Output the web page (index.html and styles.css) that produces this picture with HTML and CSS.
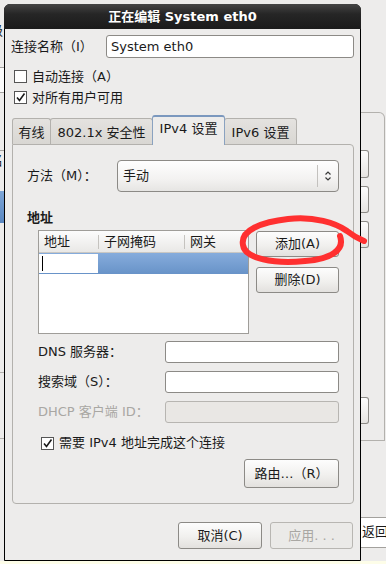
FILE: index.html
```html
<!DOCTYPE html>
<html lang="zh-CN">
<head>
    <meta charset="UTF-8">
    <title>正在编辑 System eth0</title>
    <link rel="stylesheet" href="styles.css">
</head>
<body>
    <div class="screen">
        <!-- window behind, left edge -->
        <div class="bg-left">
            <div class="bg-char">级</div>
            <div class="bg-entry"></div>
            <div class="bg-list">
                <div class="bg-list-text">名</div>
                <div class="bg-list-arrow">▽</div>
                <div class="bg-list-sel"></div>
            </div>
            <div class="bg-frame"></div>
        </div>

        <!-- Main dialog -->
        <div class="dialog-col">
            <div class="dialog">
                <div class="titlebar">正在编辑 System eth0</div>
                <div class="dialog-body">
                    <div class="name-row">
                        <span class="name-label">连接名称（I）</span>
                        <div class="entry name-entry">System eth0</div>
                    </div>
                    <div class="check-row first">
                        <span class="checkbox"></span>
                        <span>自动连接（A）</span>
                    </div>
                    <div class="check-row">
                        <span class="checkbox">
                            <svg width="11" height="11" viewBox="0 0 11 11"><path d="M2 5.5 L4.5 8.5 L9.5 1.5" fill="none" stroke="#1a1a1a" stroke-width="1.6"/></svg>
                        </span>
                        <span>对所有用户可用</span>
                    </div>

                    <div class="notebook">
                        <div class="tabs">
                            <div class="tab tab-wired">有线</div>
                            <div class="tab tab-8021x">802.1x 安全性</div>
                            <div class="tab tab-active">IPv4 设置</div>
                            <div class="tab tab-ipv6">IPv6 设置</div>
                        </div>
                        <div class="tab-panel">
                            <div class="method-row">
                                <span class="method-label">方法（M）：</span>
                                <div class="combo">
                                    <span class="combo-text">手动</span>
                                    <span class="combo-sep"></span>
                                    <span class="combo-arrows">
                                        <svg width="8" height="12" viewBox="0 0 8 12"><path d="M1.5 4.5 L4 2 L6.5 4.5 M1.5 7.5 L4 10 L6.5 7.5" fill="none" stroke="#3a3a3a" stroke-width="1.2"/></svg>
                                    </span>
                                </div>
                            </div>

                            <div class="section-title">地址</div>
                            <div class="address-row">
                                <div class="addr-table">
                                    <div class="addr-head">
                                        <div class="col col-addr">地址</div>
                                        <div class="col col-mask">子网掩码</div>
                                        <div class="col col-gw">网关</div>
                                    </div>
                                    <div class="addr-sel">
                                        <div class="edit-cell"><span class="caret"></span></div>
                                    </div>
                                </div>
                                <div class="addr-buttons">
                                    <div class="button btn-add">添加(A)</div>
                                    <div class="button btn-del">删除(D)</div>
                                </div>
                            </div>

                            <div class="form-rows">
                                <div class="form-row">
                                    <span class="form-label">DNS 服务器：</span>
                                    <div class="entry form-entry"></div>
                                </div>
                                <div class="form-row">
                                    <span class="form-label">搜索域（S）：</span>
                                    <div class="entry form-entry"></div>
                                </div>
                                <div class="form-row disabled">
                                    <span class="form-label">DHCP 客户端 ID：</span>
                                    <div class="entry form-entry"></div>
                                </div>
                            </div>

                            <div class="check-row require-row">
                                <span class="checkbox">
                                    <svg width="11" height="11" viewBox="0 0 11 11"><path d="M2 5.5 L4.5 8.5 L9.5 1.5" fill="none" stroke="#1a1a1a" stroke-width="1.6"/></svg>
                                </span>
                                <span>需要 IPv4 地址完成这个连接</span>
                            </div>

                            <div class="route-row">
                                <div class="button btn-route">路由…（R）</div>
                            </div>
                        </div>
                    </div>

                    <div class="dialog-actions">
                        <div class="button btn-cancel">取消(C)</div>
                        <div class="button btn-apply">应用. . .</div>
                    </div>
                </div>
            </div>
        </div>

        <!-- window behind, right edge -->
        <div class="bg-right">
            <div class="bg-panel">
                <div class="bg-btn b1"></div>
                <div class="bg-btn b2"></div>
                <div class="bg-btn b3"></div>
                <div class="bg-btn b4"></div>
            </div>
            <div class="bg-back">返回</div>
        </div>
    </div>
    <div class="footer-strip"></div>

    <!-- red marker drawn over the screenshot -->
    <svg class="scribble" width="386" height="564" viewBox="0 0 386 564">
        <path d="M340 236 C345 250 331 259 305 261 C274 264 245 259 243 245 C240 230 262 222 288 219 C314 216 336 223 347 231 C352 235 357 238 364 241" fill="none" stroke="#ff3030" stroke-width="6" stroke-linecap="round" stroke-linejoin="round"/>
    </svg>
</body>
</html>
```

FILE: styles.css
```css
:root {
    --bg: #edeceb;
    --text: #1a1a1a;
    --border: #8c8a86;
    --frame: #b3b1ad;
}

* {
    box-sizing: border-box;
}

body {
    margin: 0;
    width: 386px;
    height: 564px;
    overflow: hidden;
    position: relative;
    background: var(--bg);
    color: var(--text);
    font-family: "DejaVu Sans", "Noto Sans CJK SC", sans-serif;
    font-size: 13px;
    line-height: 16px;
}

.screen {
    display: flex;
    height: 561px;
}

.footer-strip {
    height: 3px;
    background: #fdfde8;
}

/* Background window bits */
.bg-left {
    width: 4px;
    overflow: hidden;
    display: flex;
    flex-direction: column;
}

.bg-char {
    margin: 24px 0 0 -10px;
    height: 14px;
    line-height: 14px;
    white-space: nowrap;
}

.bg-entry {
    margin-top: 29px;
    height: 26px;
    background: #fbfbfb;
    border-top: 1px solid #a5a3a0;
    border-bottom: 1px solid #a5a3a0;
}

.bg-list {
    margin-top: 57px;
    border-top: 1px solid #a5a3a0;
}

.bg-list-text {
    margin-left: -10px;
    height: 20px;
    line-height: 20px;
    white-space: nowrap;
}

.bg-list-arrow {
    margin-left: -8px;
    height: 20px;
    font-size: 9px;
    line-height: 10px;
}

.bg-list-sel {
    height: 32px;
    background: linear-gradient(#7ea6d7, #5a87c0);
}

.bg-frame {
    margin-top: 149px;
    height: 67px;
    border-top: 1px solid var(--frame);
    border-bottom: 1px solid var(--frame);
}

.bg-right {
    width: 25px;
    display: flex;
    flex-direction: column;
}

.bg-panel {
    margin-top: 112px;
    height: 329px;
    width: 24px;
    border: 1px solid var(--frame);
    border-left: none;
    border-radius: 0 6px 0 0;
    display: flex;
    flex-direction: column;
}

.bg-btn {
    width: 8px;
    height: 27px;
    margin-top: 8px;
    border: 1px solid var(--border);
    border-left: none;
    border-radius: 0 3px 3px 0;
    background: linear-gradient(#fdfdfd, #e6e4e1);
}

.bg-btn.b1 { margin-top: 37px; height: 28px; }
.bg-btn.b4 { margin-top: 149px; }

.bg-back {
    margin-top: 76px;
    height: 31px;
    background: #fff;
    border-top: 1px solid #a3a19d;
    border-bottom: 1px solid #a3a19d;
    padding-left: 1px;
    line-height: 28px;
    white-space: nowrap;
    overflow: hidden;
}

/* Dialog */
.dialog-col {
    width: 357px;
    padding-top: 4px;
}

.dialog {
    height: 557px;
    border: 1px solid #000;
    border-radius: 6px 6px 0 0;
    background: var(--bg);
    display: flex;
    flex-direction: column;
}

.titlebar {
    height: 25px;
    margin: -1px -1px 0;
    padding-top: 1px;
    border-radius: 6px 6px 0 0;
    background: linear-gradient(#454545, #262626 40%, #1b1b1b);
    color: #fff;
    font-weight: bold;
    text-align: center;
    line-height: 24px;
}

.dialog-body {
    padding: 6px 6px 0;
    display: flex;
    flex-direction: column;
}

.entry {
    background: #fff;
    border: 1px solid var(--border);
    border-radius: 3px;
}

.name-row {
    display: flex;
    align-items: center;
    height: 23px;
}

.name-label {
    width: 95px;
}

.name-entry {
    flex: 1;
    height: 23px;
    padding-left: 4px;
    line-height: 21px;
}

.check-row {
    display: flex;
    align-items: center;
    height: 21px;
}

.check-row.first {
    margin-top: 8px;
}

.checkbox {
    width: 13px;
    height: 13px;
    margin: 0 5px 0 3px;
    background: #fff;
    border: 1px solid #555;
    display: flex;
    align-items: center;
    justify-content: center;
}

/* Notebook */
.notebook {
    margin-left: 1px;
}

.tabs {
    height: 36px;
    display: flex;
    align-items: flex-end;
}

.tab {
    height: 26px;
    border: 1px solid var(--frame);
    border-bottom: none;
    border-radius: 3px 3px 0 0;
    background: linear-gradient(#e4e2df, #d9d7d3);
    text-align: center;
    line-height: 27px;
    margin-left: -1px;
}

.tab-wired { width: 39px; margin-left: 0; }
.tab-8021x { width: 103px; }
.tab-ipv6 { width: 73px; }

.tab-active {
    width: 73px;
    height: 30px;
    margin-bottom: -1px;
    position: relative;
    background: var(--bg);
    border-color: #8aa2c0;
    border-top: 2px solid #7b98be;
    line-height: 24px;
}

.tab-panel {
    height: 360px;
    border: 1px solid var(--frame);
    border-radius: 0 4px 4px 4px;
    padding: 15px 14px 0;
    display: flex;
    flex-direction: column;
}

.method-row {
    display: flex;
    align-items: center;
    height: 32px;
}

.method-label {
    width: 90px;
}

.combo {
    flex: 1;
    height: 32px;
    border: 1px solid var(--border);
    border-radius: 4px;
    background: linear-gradient(#fefefe, #f3f2f1 60%, #e6e5e3);
    display: flex;
    align-items: center;
}

.combo-text {
    flex: 1;
    padding-left: 5px;
}

.combo-sep {
    width: 1px;
    height: 22px;
    background: #c3c1be;
}

.combo-arrows {
    width: 20px;
    display: flex;
    justify-content: center;
}

.section-title {
    margin-top: 18px;
    font-weight: bold;
}

.address-row {
    margin-top: 4px;
    padding-left: 11px;
    display: flex;
    gap: 7px;
}

.addr-table {
    width: 211px;
    height: 104px;
    border: 1px solid #9f9d99;
    background: #fff;
}

.addr-head {
    height: 22px;
    display: flex;
    align-items: center;
    background: linear-gradient(#fcfcfc, #e9e8e6);
    border-bottom: 1px solid #c9c7c3;
}

.col {
    height: 14px;
    line-height: 14px;
    padding-left: 5px;
}

.col-addr { width: 59px; }

.col-mask {
    width: 86px;
    border-left: 1px solid #c5c3bf;
}

.col-gw {
    flex: 1;
    border-left: 1px solid #c5c3bf;
}

.addr-sel {
    height: 21px;
    background: linear-gradient(#86acdc, #6893c8);
    padding: 1px 0;
}

.edit-cell {
    width: 59px;
    height: 19px;
    background: #fff;
    padding: 2px 0 0 3px;
}

.caret {
    display: block;
    width: 1px;
    height: 15px;
    background: #000;
}

.button {
    border: 1px solid var(--border);
    border-radius: 3px;
    background: linear-gradient(#fdfdfd, #f1f0ee 55%, #e3e1de);
    display: flex;
    align-items: center;
    justify-content: center;
}

.addr-buttons {
    margin-top: 1px;
    display: flex;
    flex-direction: column;
    gap: 10px;
}

.addr-buttons .button {
    width: 83px;
    height: 26px;
}

.form-rows {
    margin-top: 7px;
    display: flex;
    flex-direction: column;
    gap: 8px;
}

.form-row {
    display: flex;
    align-items: center;
    height: 22px;
}

.form-label {
    width: 138px;
    padding-left: 11px;
    white-space: nowrap;
}

.form-entry {
    width: 174px;
    height: 22px;
}

.form-row.disabled .form-label {
    color: #a9a7a3;
}

.form-row.disabled .form-entry {
    background: #e9e7e4;
    border-color: #b7b5b1;
}

.require-row {
    margin-top: 10px;
    height: 20px;
    padding-left: 11px;
}

.route-row {
    margin-top: 6px;
    display: flex;
    justify-content: flex-end;
}

.btn-route {
    width: 95px;
    height: 29px;
}

.dialog-actions {
    margin-top: 18px;
    padding-right: 1px;
    display: flex;
    justify-content: flex-end;
    gap: 8px;
}

.dialog-actions .button {
    height: 27px;
}

.btn-cancel { width: 84px; }

.btn-apply {
    width: 83px;
    color: #a9a7a3;
    border-color: #b8b6b2;
    background: #ebeae8;
}

/* Marker over the screenshot */
.scribble {
    position: absolute;
    top: 0;
    left: 0;
    pointer-events: none;
}
```
